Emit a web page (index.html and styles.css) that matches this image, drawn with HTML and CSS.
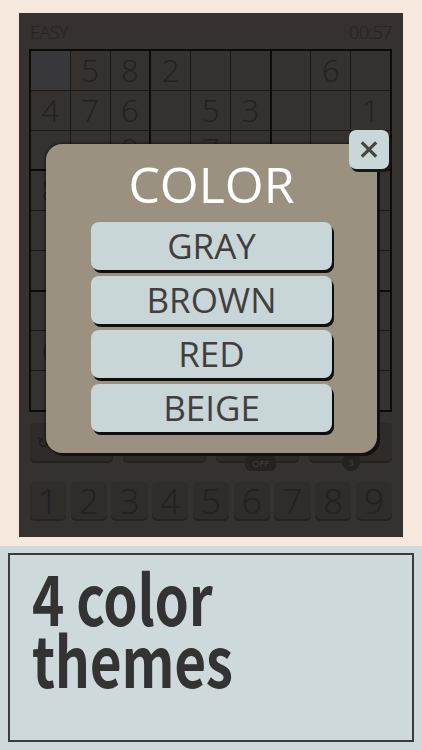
FILE: index.html
```html
<!DOCTYPE html>
<html>
<head>
<meta charset="utf-8">
<link rel="stylesheet" href="styles.css">
</head>
<body>
<div class="top">
  <div class="phone">
    <div class="hdr"><span>EASY</span><span>00:57</span></div>
    <div class="board">
      <div class="box">
        <div class="cell sel"></div><div class="cell">5</div><div class="cell">8</div>
        <div class="cell">4</div><div class="cell">7</div><div class="cell">6</div>
        <div class="cell"></div><div class="cell"></div><div class="cell">9</div>
      </div>
      <div class="box">
        <div class="cell">2</div><div class="cell"></div><div class="cell"></div>
        <div class="cell"></div><div class="cell">5</div><div class="cell">3</div>
        <div class="cell"></div><div class="cell">7</div><div class="cell"></div>
      </div>
      <div class="box">
        <div class="cell"></div><div class="cell">6</div><div class="cell"></div>
        <div class="cell"></div><div class="cell"></div><div class="cell">1</div>
        <div class="cell"></div><div class="cell"></div><div class="cell"></div>
      </div>
      <div class="box">
        <div class="cell">8</div><div class="cell"></div><div class="cell"></div>
        <div class="cell"></div><div class="cell"></div><div class="cell"></div>
        <div class="cell"></div><div class="cell"></div><div class="cell"></div>
      </div>
      <div class="box">
        <div class="cell"></div><div class="cell"></div><div class="cell"></div>
        <div class="cell"></div><div class="cell"></div><div class="cell"></div>
        <div class="cell"></div><div class="cell"></div><div class="cell"></div>
      </div>
      <div class="box">
        <div class="cell"></div><div class="cell"></div><div class="cell"></div>
        <div class="cell"></div><div class="cell"></div><div class="cell"></div>
        <div class="cell"></div><div class="cell"></div><div class="cell"></div>
      </div>
      <div class="box">
        <div class="cell"></div><div class="cell"></div><div class="cell"></div>
        <div class="cell">6</div><div class="cell"></div><div class="cell"></div>
        <div class="cell"></div><div class="cell"></div><div class="cell"></div>
      </div>
      <div class="box">
        <div class="cell"></div><div class="cell"></div><div class="cell"></div>
        <div class="cell"></div><div class="cell"></div><div class="cell"></div>
        <div class="cell"></div><div class="cell"></div><div class="cell"></div>
      </div>
      <div class="box">
        <div class="cell"></div><div class="cell"></div><div class="cell"></div>
        <div class="cell"></div><div class="cell"></div><div class="cell"></div>
        <div class="cell"></div><div class="cell"></div><div class="cell"></div>
      </div>
    </div>
    <div class="tools">
      <div class="tool"><span class="ico">&#8635;</span></div>
      <div class="tool"></div>
      <div class="tool"><span class="badge pill">OFF</span></div>
      <div class="tool"><span class="badge dot">3</span></div>
    </div>
    <div class="pad">
      <div class="key">1</div><div class="key">2</div><div class="key">3</div>
      <div class="key">4</div><div class="key">5</div><div class="key">6</div>
      <div class="key">7</div><div class="key">8</div><div class="key">9</div>
    </div>
    <div class="dialog">
      <div class="title">COLOR</div>
      <div class="opts">
        <div class="opt">GRAY</div>
        <div class="opt">BROWN</div>
        <div class="opt">RED</div>
        <div class="opt">BEIGE</div>
      </div>
      <div class="close">
        <svg viewBox="0 0 20 20"><path d="M2 2 L18 18 M18 2 L2 18" stroke="#4a4545" stroke-width="3.6" stroke-linecap="butt" fill="none"/></svg>
      </div>
    </div>
  </div>
</div>
<div class="bottom">
  <div class="frame">
    <h1 class="headline"><span class="hl">4 color</span><span class="hl">themes</span></h1>
  </div>
</div>
</body>
</html>
```
FILE: styles.css
```css
* { box-sizing: border-box; }
html, body { margin: 0; padding: 0; }
body {
  width: 422px;
  height: 750px;
  overflow: hidden;
  background: #f6e8dc;
  font-family: "Open Sans", "Noto Sans", sans-serif;
}
.top {
  height: 546px;
  padding-top: 13px;
  padding-left: 19px;
}
.phone {
  position: relative;
  width: 384px;
  height: 524px;
  background: #34312e;
  padding: 0 11px 0 10px;
}
.hdr {
  height: 36px;
  display: flex;
  justify-content: space-between;
  align-items: center;
  padding: 2px 0 0 1px;
  font-weight: 300;
  font-size: 18px;
  color: #262321;
  letter-spacing: -0.5px;
}
.board {
  width: 363px;
  height: 363px;
  background: #0c0b0a;
  padding: 2px;
  display: grid;
  grid-template-columns: repeat(3, 1fr);
  grid-template-rows: repeat(3, 1fr);
  gap: 2px;
}
.box {
  background: #1c1a19;
  display: grid;
  grid-template-columns: repeat(3, 1fr);
  grid-template-rows: repeat(3, 1fr);
  gap: 1px;
}
.cell {
  background: #34312f;
  display: flex;
  align-items: center;
  justify-content: center;
  font-weight: 300;
  font-size: 31px;
  color: #232120;
  line-height: 1;
}
.cell.sel { background: #383739; }
.tools {
  margin-top: 11px;
  margin-left: 1px;
  display: grid;
  grid-template-columns: repeat(4, 1fr);
  gap: 10px;
  height: 38px;
}
.tool {
  position: relative;
  background: #2e2b29;
  border-radius: 5px;
  box-shadow: 0 2px 0 #252321;
}
.ico {
  position: absolute;
  left: 7px;
  top: 12px;
  font-size: 15px;
  color: #1e1c1b;
  line-height: 1;
}
.badge {
  position: absolute;
  background: #252321;
  color: #3b3836;
  font-size: 9px;
  font-weight: 600;
  display: flex;
  align-items: center;
  justify-content: center;
}
.pill {
  left: 29px;
  top: 32px;
  width: 31px;
  height: 16px;
  border-radius: 6px;
}
.dot {
  left: 33px;
  top: 30px;
  width: 18px;
  height: 18px;
  border-radius: 50%;
}
.pad {
  margin-top: 21px;
  margin-left: 1px;
  display: grid;
  grid-template-columns: repeat(9, 1fr);
  gap: 4.5px;
  height: 37px;
}
.key {
  background: #2f2c2a;
  border-radius: 5px;
  box-shadow: 0 2px 0 #262422;
  display: flex;
  align-items: center;
  justify-content: center;
  font-weight: 300;
  font-size: 35px;
  line-height: 1;
  color: #222020;
}
.dialog {
  position: absolute;
  left: 27px;
  top: 131px;
  width: 331px;
  height: 309px;
  background: #9b9181;
  border-radius: 16px;
  box-shadow: 3px 3px 0 #141211, 0 0 3px 1px rgba(0,0,0,0.45);
  padding-top: 15px;
}
.title {
  text-align: center;
  color: #ffffff;
  font-size: 50px;
  line-height: 50px;
  height: 50px;
}
.opts {
  margin-top: 13px;
  display: flex;
  flex-direction: column;
  align-items: center;
  gap: 6px;
}
.opt {
  width: 241px;
  height: 48px;
  background: #c8d6d8;
  border-radius: 8px;
  box-shadow: 2px 3px 0 #0f0e0e;
  color: #433e3e;
  font-size: 35px;
  font-weight: 500;
  line-height: 48px;
  text-align: center;
}
.close {
  position: absolute;
  left: 303px;
  top: -14px;
  width: 40px;
  height: 39px;
  background: #c9d7d9;
  border-radius: 7px;
  box-shadow: 2px 3px 0 #1a1817;
  display: flex;
  align-items: center;
  justify-content: center;
}
.close svg { width: 18px; height: 19px; }
.bottom {
  height: 204px;
  background: #cdd9db;
  padding: 7px 8px 8px 8px;
}
.frame {
  height: 189px;
  border: 2px solid #3b3c3c;
  padding: 11px 0 0 22px;
}
.headline {
  margin: 0;
  font-family: "Noto Sans CJK JP", "Noto Sans", sans-serif;
  font-weight: 700;
  font-size: 55px;
  line-height: 49px;
  color: #333333;
  letter-spacing: -0.3px;
  transform: scaleY(1.26);
  transform-origin: left top;
}
.hl { display: block; }
```
